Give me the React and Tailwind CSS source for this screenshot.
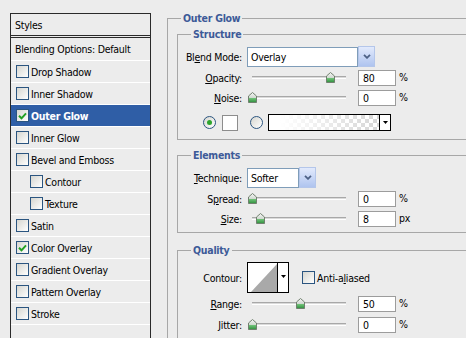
import React from "react";

const Check = ({ checked }) => (
  <span className="flex h-[13px] w-[13px] shrink-0 items-center justify-center border border-[#2b5580] bg-linear-to-br from-[#d6d6d0] to-white">
    {checked && (
      <svg width="9" height="8" viewBox="0 0 9 8">
        <path d="M1 3.8 L3.5 6.3 L8 1.3" fill="none" stroke="#22a022" strokeWidth="2" />
      </svg>
    )}
  </span>
);

const Radio = ({ checked }) => (
  <span className="flex h-[13px] w-[13px] shrink-0 items-center justify-center rounded-full border border-[#2b5580] bg-linear-to-br from-[#d6d6d0] to-white">
    {checked && <span className="h-[5px] w-[5px] rounded-full bg-[#2da52d]" />}
  </span>
);

const rows = [
  { label: "Drop Shadow" },
  { label: "Inner Shadow" },
  { label: "Outer Glow", checked: true, selected: true },
  { label: "Inner Glow" },
  { label: "Bevel and Emboss" },
  { label: "Contour", indent: true },
  { label: "Texture", indent: true },
  { label: "Satin" },
  { label: "Color Overlay", checked: true },
  { label: "Gradient Overlay" },
  { label: "Pattern Overlay" },
  { label: "Stroke" },
];

const Label = ({ children }) => (
  <div className="w-[64px] shrink-0 text-right">{children}</div>
);

const U = ({ children }) => <u className="underline-offset-[1px]">{children}</u>;

const Thumb = ({ left }) => (
  <svg className="absolute top-[2px]" style={{ left }} width="9" height="11" viewBox="0 0 9 11">
    <defs>
      <linearGradient id="thumbg" x1="0" y1="0" x2="0" y2="1">
        <stop offset="0" stopColor="#f6f6f6" />
        <stop offset="0.5" stopColor="#d2dad2" />
        <stop offset="0.6" stopColor="#6cbf74" />
        <stop offset="1" stopColor="#2f8f3d" />
      </linearGradient>
    </defs>
    <path d="M0.5 4 L4.5 0.5 L8.5 4 L8.5 10.5 L0.5 10.5 Z" fill="url(#thumbg)" stroke="#71806f" />
  </svg>
);

const Slider = ({ pos }) => (
  <div className="relative ml-[5px] h-[16px] w-[104px] shrink-0">
    <div className="mx-[5px] mt-[6px] h-[3px] border-t border-b border-t-[#a8a8a8] border-b-white bg-[#dadada]" />
    <Thumb left={pos - 4} />
  </div>
);

const Num = ({ v, unit }) => (
  <>
    <div className="ml-[7px] flex h-[16px] w-[38px] shrink-0 items-center border border-[#9c9c9c] bg-white pl-[4px]">
      {v}
    </div>
    <span className="ml-[3px] -mt-[3px]">{unit}</span>
  </>
);

const Chevron = () => (
  <svg width="8" height="5" viewBox="0 0 8 5">
    <path d="M1 0.8 L4 3.8 L7 0.8" fill="none" stroke="#4d6185" strokeWidth="1.8" />
  </svg>
);

const Select = ({ value, w }) => (
  <div className="ml-[5px] flex h-[21px] shrink-0 items-start">
    <div className={`${w} mt-[1px] flex h-[20px] items-center border border-[#7f9db9] bg-white pl-[3px]`}>
      {value}
    </div>
    <div className="flex h-[21px] w-[17px] items-center justify-center border border-[#b4c6ea] bg-linear-to-b from-[#e2eafc] to-[#afc4ef]">
      <Chevron />
    </div>
  </div>
);

const DownTri = () => (
  <svg width="5" height="3" viewBox="0 0 5 3">
    <polygon points="0,0 5,0 2.5,3" fill="#000" />
  </svg>
);

const Legend = ({ children }) => (
  <legend className="ml-[13px] px-[2px] font-bold leading-[13px] text-[#3d5a98]">{children}</legend>
);

export default function App() {
  return (
    <div className="flex h-[338px] w-[466px] items-start overflow-hidden bg-[#ececec] font-['DejaVu_Sans_Condensed','DejaVu_Sans',sans-serif] text-[10.5px] leading-[12px] tracking-[-0.25px] text-black">
      {/* Left list */}
      <div className="ml-[10px] mt-[13px] h-[340px] w-[141px] shrink-0 border border-[#2a2a2a] bg-[#ececec]">
        <div className="flex h-[24px] items-center border-b-[3px] border-double border-[#2a2a2a] pl-[4px]">
          Styles
        </div>
        <div className="flex h-[23px] items-center border-b border-white pl-[4px]">
          Blending Options: Default
        </div>
        {rows.map((r) => (
          <div
            key={r.label}
            className={`flex h-[22px] items-center gap-[2px] border-b border-white ${
              r.indent ? "pl-[19px]" : "pl-[5px]"
            } ${r.selected ? "bg-[#2f5ea6] font-bold text-white" : ""}`}
          >
            <Check checked={r.checked} />
            <span>{r.label}</span>
          </div>
        ))}
      </div>

      {/* Right panel */}
      <div className="ml-[16px] mt-[12px] w-[320px] shrink-0">
        <fieldset className="h-[400px] border border-[#a7a7a7]">
          <Legend>Outer Glow</Legend>

          {/* Structure */}
          <fieldset className="ml-[9px] mt-[3px] w-[300px] border border-[#a7a7a7] pb-[8px]">
            <Legend>Structure</Legend>
            <div className="mt-[5px] flex h-[21px] items-center">
              <Label>
                Bl<U>e</U>nd Mode:
              </Label>
              <Select value="Overlay" w="w-[111px]" />
            </div>
            <div className="mt-[3px] flex h-[16px] items-center">
              <Label>
                <U>O</U>pacity:
              </Label>
              <Slider pos={83} />
              <Num v="80" unit="%" />
            </div>
            <div className="mt-[4px] flex h-[16px] items-center">
              <Label>
                <U>N</U>oise:
              </Label>
              <Slider pos={5} />
              <Num v="0" unit="%" />
            </div>
            <div className="mt-[8px] flex h-[17px] items-center">
              <span className="ml-[25px]">
                <Radio checked />
              </span>
              <div className="ml-[6px] h-[16px] w-[16px] border border-[#8d8d8d] bg-white" />
              <span className="ml-[12px]">
                <Radio />
              </span>
              <div className="ml-[5px] flex h-[17px] w-[123px] border border-black">
                <div className="flex-1 bg-[repeating-conic-gradient(#d6d6d6_0%_25%,#ffffff_0%_50%)] bg-[length:8px_8px]">
                  <div className="h-full bg-linear-to-r from-white from-10% to-white/0" />
                </div>
                <div className="flex w-[11px] items-center justify-center border-l border-black bg-white">
                  <DownTri />
                </div>
              </div>
            </div>
          </fieldset>

          {/* Elements */}
          <fieldset className="ml-[9px] mt-[9px] w-[300px] border border-[#a7a7a7] pb-[5px]">
            <Legend>Elements</Legend>
            <div className="mt-[5px] flex h-[21px] items-center">
              <Label>
                <U>T</U>echnique:
              </Label>
              <Select value="Softer" w="w-[52px]" />
            </div>
            <div className="mt-[3px] flex h-[16px] items-center">
              <Label>
                S<U>p</U>read:
              </Label>
              <Slider pos={5} />
              <Num v="0" unit="%" />
            </div>
            <div className="mt-[4px] flex h-[16px] items-center">
              <Label>
                <U>S</U>ize:
              </Label>
              <Slider pos={13} />
              <Num v="8" unit="px" />
            </div>
          </fieldset>

          {/* Quality */}
          <fieldset className="ml-[9px] mt-[11px] w-[300px] border border-[#a7a7a7] pb-[8px]">
            <Legend>Quality</Legend>
            <div className="mt-[5px] flex h-[31px] items-center">
              <Label>Contour:</Label>
              <div className="ml-[5px] flex h-[31px] w-[42px] shrink-0 border border-black bg-white">
                <div className="h-full w-[30px] border-r border-black">
                  <svg width="29" height="29" viewBox="0 0 29 29">
                    <polygon points="3,29 29,1 29,29" fill="#a9a9a9" />
                  </svg>
                </div>
                <div className="flex flex-1 items-center justify-center pb-[3px]">
                  <DownTri />
                </div>
              </div>
              <span className="ml-[13px]">
                <Check />
              </span>
              <span className="ml-[2px]">
                Anti-a<U>l</U>iased
              </span>
            </div>
            <div className="mt-[3px] flex h-[16px] items-center">
              <Label>
                <U>R</U>ange:
              </Label>
              <Slider pos={53} />
              <Num v="50" unit="%" />
            </div>
            <div className="mt-[5px] flex h-[16px] items-center">
              <Label>
                <U>J</U>itter:
              </Label>
              <Slider pos={5} />
              <Num v="0" unit="%" />
            </div>
          </fieldset>
        </fieldset>
      </div>
    </div>
  );
}
